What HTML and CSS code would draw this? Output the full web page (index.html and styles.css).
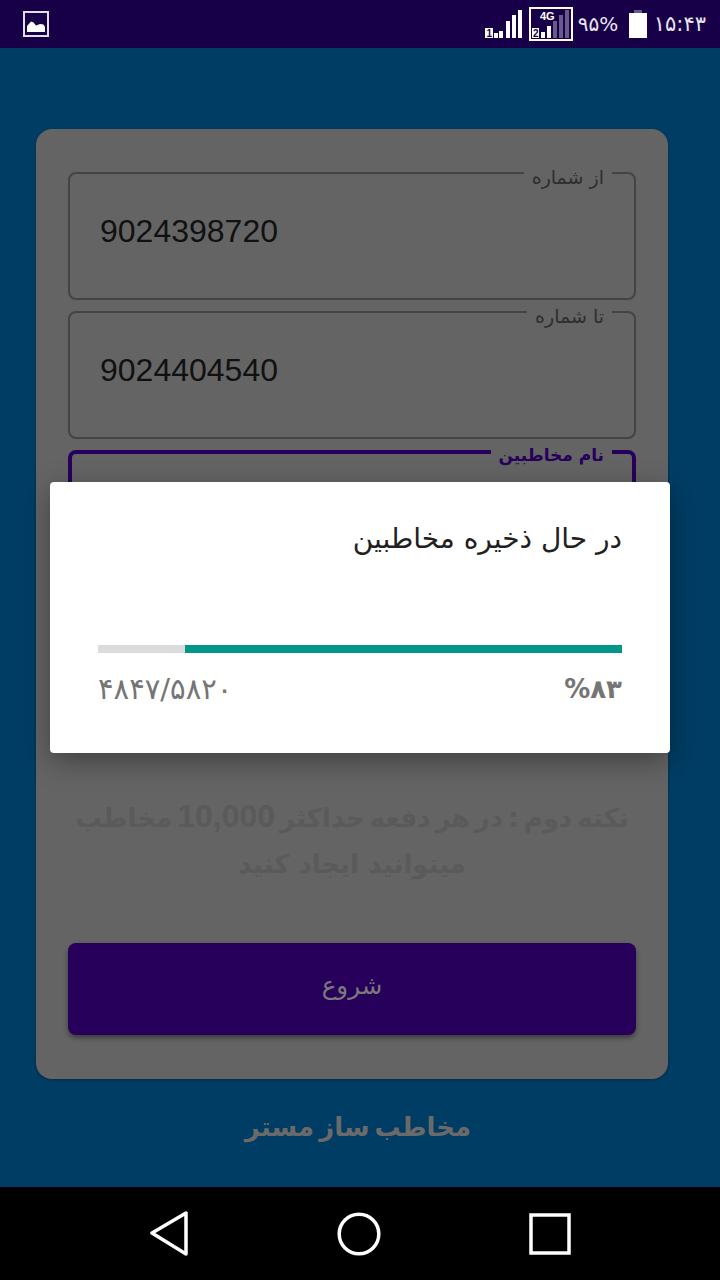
FILE: index.html
```html
<!DOCTYPE html>
<html lang="fa" dir="rtl">
<head>
<meta charset="utf-8">
<title>مخاطب ساز مستر</title>
<link rel="stylesheet" href="styles.css">
</head>
<body>
<div class="app">
  <header class="status" dir="ltr">
    <svg class="gallery" width="26" height="26" viewBox="0 0 26 26"><rect x="1" y="1" width="24" height="24" fill="none" stroke="#e2deea" stroke-width="2"/><path d="M4 21V15L8 10.500L10.500 11.500L13 14.500L17 13L20.500 13.500L22 16V21Z" fill="#fff"/></svg>
    <div class="status-right">
      <svg class="sim1" width="38" height="30" viewBox="0 0 38 30"><rect x="0" y="19" width="8" height="10" fill="#fff"/><text x="1.500" y="28" class="simnum" fill="#180048">1</text><rect x="9" y="24" width="4" height="5" fill="#fff"/><rect x="14" y="22" width="4" height="7" fill="#fff"/><rect x="21" y="12" width="4" height="17" fill="#fff"/><rect x="27" y="6" width="4" height="23" fill="#fff"/><rect x="33" y="1" width="4" height="28" fill="#fff"/></svg>
      <svg class="sim2" width="44" height="34" viewBox="0 0 44 34"><rect x="1" y="1" width="42" height="32" fill="none" stroke="#fff" stroke-width="2"/><text x="11" y="13" class="net" fill="#fff">4G</text><rect x="3" y="21" width="7" height="10" fill="#fff"/><text x="4" y="30" class="simnum" fill="#180048">2</text><rect x="12" y="25" width="4" height="6" fill="#fff"/><rect x="18" y="19" width="4" height="12" fill="#fff"/><rect x="24" y="14" width="4" height="17" fill="#6a5a8c"/><rect x="30" y="8" width="4" height="23" fill="#6a5a8c"/><rect x="36" y="3" width="4" height="28" fill="#6a5a8c"/></svg>
      <span class="pct">۹۵%</span>
      <svg class="batt" width="18" height="28" viewBox="0 0 18 28"><rect x="5" y="0" width="8" height="3" fill="#6a5a8c"/><rect x="0" y="3" width="18" height="25" fill="#fff"/></svg>
      <span class="clock">۱۵:۴۳</span>
    </div>
  </header>

  <main class="screen">
    <section class="card">
      <div class="field">
        <span class="legend">از شماره</span>
        <span class="value" dir="ltr">9024398720</span>
      </div>
      <div class="field">
        <span class="legend">تا شماره</span>
        <span class="value" dir="ltr">9024404540</span>
      </div>
      <div class="field focused">
        <span class="legend">نام مخاطبین</span>
      </div>
      <p class="note"><span class="tight">نکته دوم : در هر دفعه حداکثر <span class="latin">10,000</span> مخاطب</span><br>میتوانید ایجاد کنید</p>
      <button class="start">شروع</button>
    </section>
    <h1 class="brand">مخاطب ساز مستر</h1>
  </main>

  <nav class="navbar" dir="ltr">
    <svg width="40" height="46" viewBox="0 0 40 46"><path d="M3 22L37 2V43Z" fill="none" stroke="#fff" stroke-width="3.500" stroke-linejoin="round"/></svg>
    <svg width="46" height="46" viewBox="0 0 46 46"><circle cx="23" cy="23" r="19.800" fill="none" stroke="#fff" stroke-width="3.500"/></svg>
    <svg width="44" height="44" viewBox="0 0 44 44"><rect x="3" y="3" width="38" height="38" fill="none" stroke="#fff" stroke-width="3.500"/></svg>
  </nav>

  <div class="dialog">
    <h2 class="dialog-title">در حال ذخیره مخاطبین</h2>
    <div class="track"><div class="fill" style="width:83.4%"></div></div>
    <div class="counts">
      <span class="percent" dir="ltr">%۸۳</span>
      <span class="count" dir="ltr">۴۸۴۷/۵۸۲۰</span>
    </div>
  </div>
</div>
</body>
</html>
```

FILE: styles.css
```css
* { box-sizing: border-box; }
html, body { margin: 0; padding: 0; }
body { font-family: "DejaVu Sans", "Noto Sans", sans-serif; background: #000; }
.app { position: relative; width: 720px; height: 1280px; display: flex; flex-direction: column; overflow: hidden; }

.status { height: 48px; flex: none; background: #180048; display: flex; align-items: center; justify-content: space-between; padding: 0 14px 0 23px; color: #e8e4f0; }
.status-right { display: flex; align-items: center; }
.sim1 { margin-right: 6px; }
.sim2 { margin-right: 5px; }
.pct { font-size: 20px; width: 51px; }
.batt { margin-right: 7px; }
.clock { font-size: 21px; }
.simnum { font: bold 10px "Liberation Sans", sans-serif; }
.net { font: bold 11px "Liberation Sans", sans-serif; }

.screen { flex: 1; background: #003d64; padding: 81px 52px 0 36px; display: flex; flex-direction: column; align-items: stretch; }
.card { width: 632px; height: 950px; background: #646464; border-radius: 16px; padding: 43px 32px 0; box-shadow: 0 1px 3px rgba(0,0,0,.3); display: flex; flex-direction: column; }
.field { position: relative; height: 128px; flex: none; border: 2px solid #444; border-radius: 8px; margin-bottom: 11px; display: flex; align-items: center; padding: 0 30px 10px; justify-content: flex-end; }
.legend { position: absolute; top: -10px; right: 22px; padding: 0 8px; background: #646464; color: #2e2e2e; font-size: 19px; line-height: 26px; }
.value { font: 32px "Liberation Sans", sans-serif; color: #111; }
.focused { border: 4px solid #27005c; }
.focused .legend { color: #27005c; top: -12px; right: 20px; font-size: 17px; font-weight: bold; }
.note { margin: 206px 0 0; color: #5a5a5a; font-size: 26px; line-height: 46px; font-weight: bold; text-align: center; white-space: nowrap; }
.tight { word-spacing: -4px; }
.latin { font: bold 32px "Liberation Sans", sans-serif; }
.start { margin-top: 56px; height: 92px; flex: none; border: 0; border-radius: 8px; background: #27005c; color: #7a7a7a; font: 24.500px "DejaVu Sans", sans-serif; box-shadow: 0 3px 5px rgba(0,0,0,.4); padding: 0 0 8px; }
.brand { width: 632px; margin: 26px 0 0; padding-left: 12px; text-align: center; color: #6a6a6a; font-size: 26px; line-height: 44px; font-weight: bold; word-spacing: -4px; }

.navbar { height: 93px; flex: none; background: #000; display: flex; align-items: center; padding: 0 148px 0 149px; justify-content: space-between; }

.dialog { position: absolute; left: 50px; top: 482px; width: 620px; height: 271px; background: #fff; border-radius: 4px; padding: 36px 48px 0; box-shadow: 0 8px 28px rgba(0,0,0,.35); }
.dialog-title { margin: 0; font-size: 28px; line-height: 42px; font-weight: normal; color: #212121; text-align: right; }
.track { margin-top: 85px; height: 8px; background: #dcdcdc; }
.fill { height: 100%; background: #009688; }
.counts { margin-top: 18px; display: flex; justify-content: space-between; align-items: center; color: #757575; font-size: 26px; line-height: 36px; }
.percent { font-weight: bold; }
.count { font-size: 29px; }
```
